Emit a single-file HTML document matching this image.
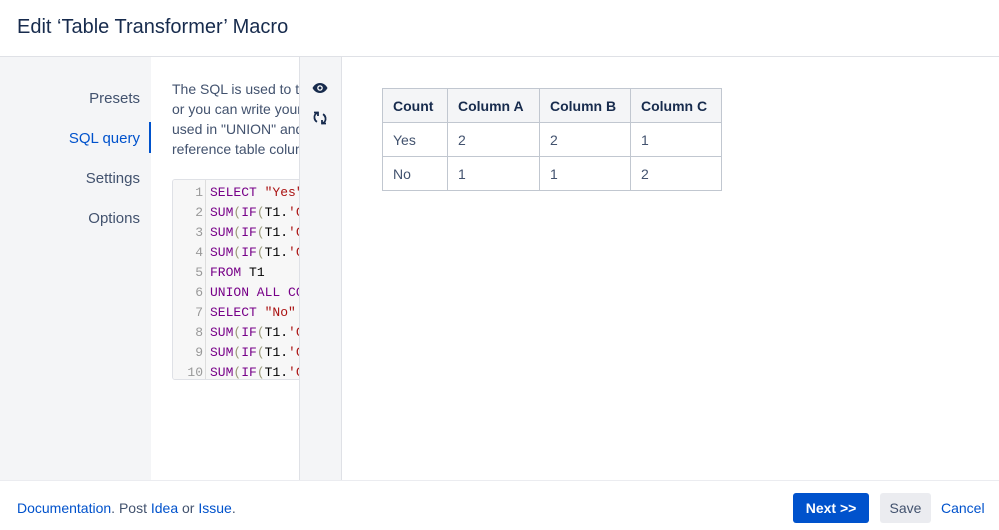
<!DOCTYPE html>
<html><head><meta charset="utf-8"><style>
*{box-sizing:border-box;margin:0;padding:0}
body{width:999px;height:530px;overflow:hidden;background:#fff;font-family:"Liberation Sans",sans-serif;color:#172b4d;position:relative}
.hdr{position:absolute;left:0;top:0;width:999px;height:57px;border-bottom:1px solid #dfe1e6}
.hdr h1{position:absolute;left:17px;top:16px;font-size:20px;font-weight:normal;color:#172b4d}
.side{position:absolute;left:0;top:57px;width:151px;height:423px;background:#f4f5f7}
.side div{position:absolute;right:11px;font-size:15px;color:#42526e}
.side .act{color:#0052cc}
.bar{position:absolute;left:149px;top:122px;width:3px;height:31px;background:#0052cc}
.content{position:absolute;left:151px;top:57px;width:148px;height:423px;background:#fff;overflow:hidden}
.desc{position:absolute;left:21px;top:22px;width:300px;font-size:14px;line-height:20px;color:#42526e;white-space:nowrap}
.code{position:absolute;left:21px;top:122px;width:140px;height:201px;border:1px solid #dfe1e6;border-radius:3px;background:#f7f7f7;overflow:hidden;font-family:"Liberation Mono",monospace;font-size:13px}
.gut{position:absolute;left:0;top:0;width:33px;height:100%;border-right:1px solid #ddd;background:#f7f7f7}
.ln{position:absolute;left:0;width:30px;text-align:right;color:#999}
.cl{position:absolute;left:37px;white-space:pre;color:#000}
.k{color:#770088}.s{color:#aa1111}.p{color:#997}
.tool{position:absolute;left:299px;top:57px;width:43px;height:423px;background:#f4f5f7;border-left:1px solid #dfe1e6;border-right:1px solid #dfe1e6}
table{position:absolute;left:382px;top:88px;border-collapse:collapse;font-size:14px}
td,th{border:1px solid #c1c7d0;height:34px;padding:0 10px;text-align:left;color:#172b4d}
th{background:#f4f5f7;font-weight:bold}
td{font-weight:normal;color:#42526e}
.foot{position:absolute;left:0;top:480px;width:999px;height:50px;border-top:1px solid #ebecf0}
.foot .l{position:absolute;left:17px;top:19px;font-size:14px;color:#42526e}
a{color:#0052cc;text-decoration:none}
.next{position:absolute;left:793px;top:12px;width:76px;height:30px;background:#0052cc;color:#fff;border-radius:3px;font-weight:bold;font-size:14px;text-align:center;line-height:30px}
.save{position:absolute;left:880px;top:12px;width:51px;height:30px;background:#ebecf0;color:#42526e;border-radius:3px;font-size:14px;text-align:center;line-height:30px}
.cancel{position:absolute;left:941px;top:19px;font-size:14px;color:#0052cc}
</style></head><body>
<div class="hdr"><h1>Edit ‘Table Transformer’ Macro</h1></div>
<div class="side">
<div style="top:33px">Presets</div>
<div class="act" style="top:73px">SQL query</div>
<div style="top:113px">Settings</div>
<div style="top:153px">Options</div>
</div>
<div class="bar"></div>
<div class="content">
<div class="desc">The SQL is used to transform<br>or you can write your own<br>used in "UNION" and<br>reference table columns</div>
<div class="code">
<div class="gut"></div>
<div class="ln" style="top:5px">1</div><div class="cl" style="top:5px"><span class="k">SELECT</span> <span class="s">"Yes"</span></div>
<div class="ln" style="top:25px">2</div><div class="cl" style="top:25px"><span class="k">SUM</span><span class="p">(</span><span class="k">IF</span><span class="p">(</span>T1.<span class="s">'C</span></div>
<div class="ln" style="top:45px">3</div><div class="cl" style="top:45px"><span class="k">SUM</span><span class="p">(</span><span class="k">IF</span><span class="p">(</span>T1.<span class="s">'C</span></div>
<div class="ln" style="top:65px">4</div><div class="cl" style="top:65px"><span class="k">SUM</span><span class="p">(</span><span class="k">IF</span><span class="p">(</span>T1.<span class="s">'C</span></div>
<div class="ln" style="top:85px">5</div><div class="cl" style="top:85px"><span class="k">FROM</span> T1</div>
<div class="ln" style="top:105px">6</div><div class="cl" style="top:105px"><span class="k">UNION ALL CO</span></div>
<div class="ln" style="top:125px">7</div><div class="cl" style="top:125px"><span class="k">SELECT</span> <span class="s">"No"</span></div>
<div class="ln" style="top:145px">8</div><div class="cl" style="top:145px"><span class="k">SUM</span><span class="p">(</span><span class="k">IF</span><span class="p">(</span>T1.<span class="s">'C</span></div>
<div class="ln" style="top:165px">9</div><div class="cl" style="top:165px"><span class="k">SUM</span><span class="p">(</span><span class="k">IF</span><span class="p">(</span>T1.<span class="s">'C</span></div>
<div class="ln" style="top:185px">10</div><div class="cl" style="top:185px"><span class="k">SUM</span><span class="p">(</span><span class="k">IF</span><span class="p">(</span>T1.<span class="s">'C</span></div>
</div>
</div>
<div class="tool">
<svg style="position:absolute;left:12px;top:25px" width="16" height="12" viewBox="0 0 16 12"><path d="M8 1C4 1 1.5 4 0.5 6 1.5 8 4 11 8 11s6.5-3 7.5-5C14.5 4 12 1 8 1z" fill="#172b4d"/><circle cx="8" cy="6" r="2.8" fill="#fff"/><circle cx="8" cy="6" r="1.5" fill="#172b4d"/></svg>
<svg style="position:absolute;left:12px;top:53px" width="16" height="16" viewBox="0 0 16 16" fill="none" stroke="#172b4d" stroke-width="1.8"><path d="M6 2.5C3.5 3.3 2 5.5 2.5 8.3c.3 1.6 1.3 2.8 2.5 3.5"/><path d="M10 13.5c2.5-.8 4-3 3.5-5.8-.3-1.6-1.3-2.8-2.5-3.5"/><path d="M2 2.5h4v3.5" /><path d="M14 13.5h-4V10"/></svg>
</div>
<table>
<tr><th style="width:65px">Count</th><th style="width:92px">Column A</th><th style="width:91px">Column B</th><th style="width:91px">Column C</th></tr>
<tr><td>Yes</td><td>2</td><td>2</td><td>1</td></tr>
<tr><td>No</td><td>1</td><td>1</td><td>2</td></tr>
</table>
<div class="foot">
<div class="l"><a>Documentation</a>. Post <a>Idea</a> or <a>Issue</a>.</div>
<div class="next">Next &gt;&gt;</div>
<div class="save">Save</div>
<div class="cancel">Cancel</div>
</div>
</body></html>
